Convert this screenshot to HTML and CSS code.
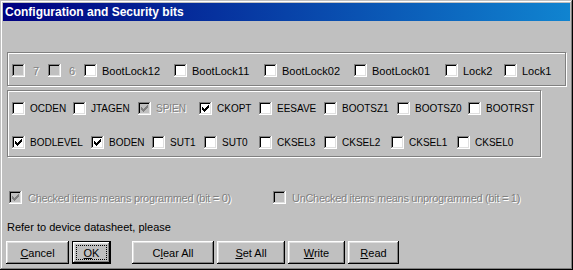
FILE: index.html
```html
<!DOCTYPE html>
<html>
  <head>
    <meta charset="UTF-8" />
    <title>Configuration and Security bits</title>
    <link rel="stylesheet" href="styles.css">
  </head>
  <body>
    <!--Dialog window with the classic 3D frame-->
    <div class="window">
      <div class="titlebar">Configuration and Security bits</div>
      <div class="client">
        <!--Lock bits, one row-->
        <div class="group group-lock">
          <div class="bits bits-lock">
            <label class="bit is-disabled"><span class="box"></span><span class="name name-num">7</span></label>
            <label class="bit is-disabled"><span class="box"></span><span class="name name-num">6</span></label>
            <label class="bit"><span class="box"></span><span class="name">BootLock12</span></label>
            <label class="bit"><span class="box"></span><span class="name">BootLock11</span></label>
            <label class="bit"><span class="box"></span><span class="name">BootLock02</span></label>
            <label class="bit"><span class="box"></span><span class="name">BootLock01</span></label>
            <label class="bit"><span class="box"></span><span class="name">Lock2</span></label>
            <label class="bit"><span class="box"></span><span class="name">Lock1</span></label>
          </div>
        </div>
        <!--Fuse bits, high byte then low byte-->
        <div class="group group-fuse">
          <div class="bits bits-high">
            <label class="bit fuse"><span class="box"></span><span class="name">OCDEN</span></label>
            <label class="bit fuse"><span class="box"></span><span class="name">JTAGEN</span></label>
            <label class="bit fuse is-disabled"><span class="box"><svg class="tick" viewBox="0 0 7 7"><path d="M0 2h1v3H0zM1 3h1v3H1zM2 4h1v3H2zM3 3h1v3H3zM4 2h1v3H4zM5 1h1v3H5zM6 0h1v3H6z"/></svg></span><span class="name">SPIEN</span></label>
            <label class="bit fuse"><span class="box"><svg class="tick" viewBox="0 0 7 7"><path d="M0 2h1v3H0zM1 3h1v3H1zM2 4h1v3H2zM3 3h1v3H3zM4 2h1v3H4zM5 1h1v3H5zM6 0h1v3H6z"/></svg></span><span class="name">CKOPT</span></label>
            <label class="bit fuse"><span class="box"></span><span class="name">EESAVE</span></label>
            <label class="bit fuse"><span class="box"></span><span class="name">BOOTSZ1</span></label>
            <label class="bit fuse"><span class="box"></span><span class="name">BOOTSZ0</span></label>
            <label class="bit fuse"><span class="box"></span><span class="name">BOOTRST</span></label>
          </div>
          <div class="bits bits-low">
            <label class="bit fuse"><span class="box"><svg class="tick" viewBox="0 0 7 7"><path d="M0 2h1v3H0zM1 3h1v3H1zM2 4h1v3H2zM3 3h1v3H3zM4 2h1v3H4zM5 1h1v3H5zM6 0h1v3H6z"/></svg></span><span class="name">BODLEVEL</span></label>
            <label class="bit fuse"><span class="box"><svg class="tick" viewBox="0 0 7 7"><path d="M0 2h1v3H0zM1 3h1v3H1zM2 4h1v3H2zM3 3h1v3H3zM4 2h1v3H4zM5 1h1v3H5zM6 0h1v3H6z"/></svg></span><span class="name">BODEN</span></label>
            <label class="bit fuse"><span class="box"></span><span class="name">SUT1</span></label>
            <label class="bit fuse"><span class="box"></span><span class="name">SUT0</span></label>
            <label class="bit fuse"><span class="box"></span><span class="name">CKSEL3</span></label>
            <label class="bit fuse"><span class="box"></span><span class="name">CKSEL2</span></label>
            <label class="bit fuse"><span class="box"></span><span class="name">CKSEL1</span></label>
            <label class="bit fuse"><span class="box"></span><span class="name">CKSEL0</span></label>
          </div>
        </div>
        <!--Legend, both items greyed out-->
        <div class="legend">
          <label class="bit is-disabled"><span class="box"><svg class="tick" viewBox="0 0 7 7"><path d="M0 2h1v3H0zM1 3h1v3H1zM2 4h1v3H2zM3 3h1v3H3zM4 2h1v3H4zM5 1h1v3H5zM6 0h1v3H6z"/></svg></span><span class="name">Checked items means programmed (bit = 0)</span></label>
          <label class="bit is-disabled"><span class="box"></span><span class="name">UnChecked items means unprogrammed (bit = 1)</span></label>
        </div>
        <p class="note">Refer to device datasheet, please</p>
        <div class="buttons">
          <button class="btn btn-cancel"><u>C</u>ancel</button>
          <button class="btn btn-ok is-default"><u>O</u>K</button>
          <button class="btn btn-clear">C<u>l</u>ear All</button>
          <button class="btn btn-set"><u>S</u>et All</button>
          <button class="btn btn-write"><u>W</u>rite</button>
          <button class="btn btn-read"><u>R</u>ead</button>
        </div>
      </div>
    </div>
  </body>
</html>
```

FILE: styles.css
```css
/* plain page, the dialog fills the whole viewport */
body {
  margin: 0;
  font-family: "Liberation Sans", Arial, sans-serif;
  font-size: 11px;
  color: #000;
}

/* window frame: light top-left edges, dark bottom-right edges */
.window {
  width: 573px;
  height: 270px;
  box-sizing: border-box;
  padding: 3px;
  background: #c0c0c0;
  box-shadow: inset -1px -1px #000, inset 1px 1px #c0c0c0,
    inset -2px -2px #808080, inset 2px 2px #fff;
}

.titlebar {
  height: 18px;
  line-height: 18px;
  padding-left: 2px;
  color: #fff;
  font-weight: bold;
  font-size: 12px;
  background: linear-gradient(to right, #000080, #1084d0);
}

.client {
  display: flex;
  flex-direction: column;
}

/* etched group boxes without a caption */
.group {
  box-sizing: border-box;
  margin-left: 4px;
  border: 1px solid #808080;
  box-shadow: 1px 1px 0 #fff, inset 1px 1px 0 #fff;
}

.group-lock {
  width: 559px;
  height: 34px;
  margin-top: 31px;
  padding: 11px 0 0 4px;
}

.group-fuse {
  width: 534px;
  height: 67px;
  margin-top: 4px;
  padding: 11px 0 0 4px;
  display: flex;
  flex-direction: column;
  gap: 21px;
}

/* each row keeps the column widths of the original dialog */
.bits {
  display: grid;
  height: 13px;
}

.bits-lock {
  grid-template-columns: 36px 36px 90px 90px 90px 91px 59px auto;
}

.bits-high {
  grid-template-columns: 61px 65px 61px 60px 65px 73px 71px auto;
}

.bits-low {
  grid-template-columns: 79px 61px 52px 55px 65px 67px 66px auto;
}

/* checkbox with its label */
.bit {
  display: flex;
  align-items: center;
  gap: 5px;
  height: 13px;
  white-space: nowrap;
}

.box {
  flex: none;
  width: 13px;
  height: 13px;
  box-sizing: border-box;
  display: flex;
  align-items: center;
  justify-content: center;
  background: #fff;
  color: #000;
  box-shadow: inset -1px -1px #fff, inset 1px 1px #808080,
    inset -2px -2px #dfdfdf, inset 2px 2px #000;
}

.tick {
  width: 7px;
  height: 7px;
  fill: currentColor;
  shape-rendering: crispEdges;
}

.name-num {
  margin-left: 3px;
}

.fuse .name {
  font-size: 10px;
}

.is-disabled .box {
  background: #c0c0c0;
  color: #808080;
}

.is-disabled .name {
  color: #808080;
  text-shadow: 1px 1px 0 #fff;
}

.legend {
  display: grid;
  grid-template-columns: 264px auto;
  margin-top: 34px;
  padding-left: 6px;
}

.legend .bit {
  gap: 6px;
}

.legend .name {
  letter-spacing: -0.3px;
}

.note {
  margin: 17px 0 0 4px;
  line-height: 13px;
}

/* push buttons along the bottom */
.buttons {
  display: flex;
  gap: 3px;
  margin-top: 7px;
  padding-left: 3px;
}

.btn {
  height: 23px;
  padding: 0;
  border: none;
  background: #c0c0c0;
  font-family: "Liberation Sans", Arial, sans-serif;
  font-size: 11px;
  color: #000;
  box-shadow: inset -1px -1px #000, inset 1px 1px #fff,
    inset -2px -2px #808080, inset 2px 2px #dfdfdf;
}

.btn u {
  text-underline-offset: 1px;
}

.btn-cancel { width: 63px; }
.btn-ok { width: 39px; position: relative; }
.btn-clear { width: 82px; margin-left: 18px; }
.btn-set { width: 68px; }
.btn-write { width: 57px; }
.btn-read { width: 51px; }

/* default button: black frame plus dotted focus rectangle */
.is-default {
  border: 1px solid #000;
}

.is-default::after {
  content: "";
  position: absolute;
  left: 3px;
  top: 3px;
  right: 3px;
  bottom: 3px;
  border: 1px dotted #000;
}
```
